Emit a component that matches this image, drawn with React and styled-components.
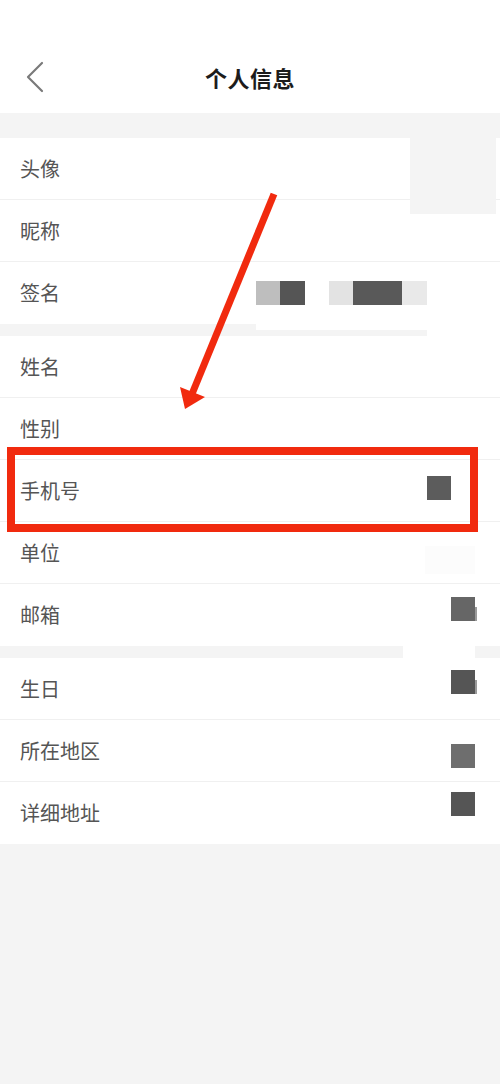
import React from "react";
import styled, { createGlobalStyle } from "styled-components";

const GlobalStyle = createGlobalStyle`
  html, body { margin: 0; padding: 0; background: #f4f4f4; }
  body { font-family: "Noto Sans CJK SC", "Noto Sans", sans-serif; }
  * { box-sizing: border-box; }
`;

const Page = styled.div`
  position: relative;
  width: 500px;
  min-height: 1084px;
  background: #f4f4f4;
  overflow: hidden;
`;

const Header = styled.header`
  height: 113px;
  padding-top: 40px;
  background: #fff;
  display: grid;
  grid-template-columns: 1fr auto 1fr;
  align-items: center;
`;

const BackButton = styled.button`
  justify-self: start;
  margin-left: 26px;
  padding: 0;
  border: 0;
  background: transparent;
  display: flex;
  align-items: center;
  height: 32px;
`;

const Title = styled.h1`
  margin: 0;
  font-size: 22px;
  font-weight: 700;
  color: #1c1c1c;
  letter-spacing: 0.5px;
  line-height: 1;
`;

const Group = styled.section`
  background: #fff;
  margin-top: ${(p) => p.$gap}px;
  display: flex;
  flex-direction: column;
`;

const Row = styled.div`
  height: 62px;
  display: flex;
  align-items: center;
  padding-left: 20px;
  border-bottom: 1px solid #f0f0f0;
  &:last-child { border-bottom: 0; }
`;

const Label = styled.span`
  font-size: 20px;
  color: #555;
  line-height: 1;
`;

const Value = styled.div`
  margin-left: auto;
  margin-right: ${(p) => p.$right}px;
  transform: translateY(${(p) => p.$dy}px);
  display: flex;
  align-items: center;
`;

const Mask = styled.span`
  display: block;
  width: ${(p) => p.$w || 24}px;
  height: ${(p) => p.$h || 24}px;
  background: ${(p) => p.$c};
`;

const Tick = styled.span`
  display: block;
  width: 2px;
  height: 14px;
  margin-top: 10px;
  background: #9a9a9a;
`;

const MaskGroup = styled.div`
  margin-left: auto;
  margin-right: 73px;
  display: flex;
  gap: 24px;
`;

const MaskStrip = styled.div`
  display: flex;
`;

const Patch = styled.div`
  position: absolute;
  left: ${(p) => p.$x}px;
  top: ${(p) => p.$y}px;
  width: ${(p) => p.$w}px;
  height: ${(p) => p.$h}px;
  background: ${(p) => p.$c};
`;

const Highlight = styled.div`
  position: absolute;
  left: 7px;
  top: 447px;
  width: 471px;
  height: 85px;
  border: 8px solid #f12a0e;
`;

const ArrowSvg = styled.svg`
  position: absolute;
  left: 0;
  top: 0;
  pointer-events: none;
`;

const rows1 = ["头像", "昵称"];
const rows2 = [
  { label: "姓名" },
  { label: "性别" },
  { label: "手机号", mask: { right: 49, dy: -3, c: "#5c5c5c" } },
  { label: "单位" },
  { label: "邮箱", mask: { right: 23, dy: -6, c: "#666", tick: true } },
];
const rows3 = [
  { label: "生日", mask: { right: 23, dy: -7, c: "#555", tick: true } },
  { label: "所在地区", mask: { right: 25, dy: 5, c: "#6e6e6e" } },
  { label: "详细地址", mask: { right: 25, dy: -9, c: "#555" } },
];

function InfoRow({ label, mask }) {
  return (
    <Row>
      <Label>{label}</Label>
      {mask && (
        <Value $right={mask.right} $dy={mask.dy}>
          <Mask $c={mask.c} />
          {mask.tick && <Tick />}
        </Value>
      )}
    </Row>
  );
}

export default function App() {
  return (
    <>
      <GlobalStyle />
      <Page>
        <Header>
          <BackButton aria-label="返回">
            <svg width="18" height="32" viewBox="0 0 18 32">
              <polyline
                points="16,2 2,16 16,30"
                fill="none"
                stroke="#7a7a7a"
                strokeWidth="2.2"
                strokeLinecap="round"
                strokeLinejoin="round"
              />
            </svg>
          </BackButton>
          <Title>个人信息</Title>
          <span />
        </Header>

        <Group $gap={25}>
          {rows1.map((l) => (
            <InfoRow key={l} label={l} />
          ))}
          <Row>
            <Label>签名</Label>
            <MaskGroup>
              <MaskStrip>
                <Mask $c="#bebebe" />
                <Mask $w={25} $c="#555" />
              </MaskStrip>
              <MaskStrip>
                <Mask $c="#e3e3e3" />
                <Mask $w={49} $c="#595959" />
                <Mask $w={25} $c="#e9e9e9" />
              </MaskStrip>
            </MaskGroup>
          </Row>
        </Group>

        <Group $gap={12}>
          {rows2.map((r) => (
            <InfoRow key={r.label} {...r} />
          ))}
        </Group>

        <Group $gap={12}>
          {rows3.map((r) => (
            <InfoRow key={r.label} {...r} />
          ))}
        </Group>

        <Patch $x={410} $y={138} $w={86} $h={76} $c="#f4f4f4" />
        <Patch $x={256} $y={324} $w={171} $h={6} $c="#fff" />
        <Patch $x={427} $y={324} $w={73} $h={12} $c="#fff" />
        <Patch $x={425} $y={546} $w={50} $h={28} $c="#fcfcfc" />
        <Patch $x={403} $y={646} $w={72} $h={12} $c="#fff" />

        <Highlight />

        <ArrowSvg width="500" height="1084" viewBox="0 0 500 1084">
          <line
            x1="274"
            y1="194"
            x2="192"
            y2="394"
            stroke="#f12a0e"
            strokeWidth="7"
          />
          <polygon points="185,409 180,387 205,397" fill="#f12a0e" />
        </ArrowSvg>
      </Page>
    </>
  );
}
